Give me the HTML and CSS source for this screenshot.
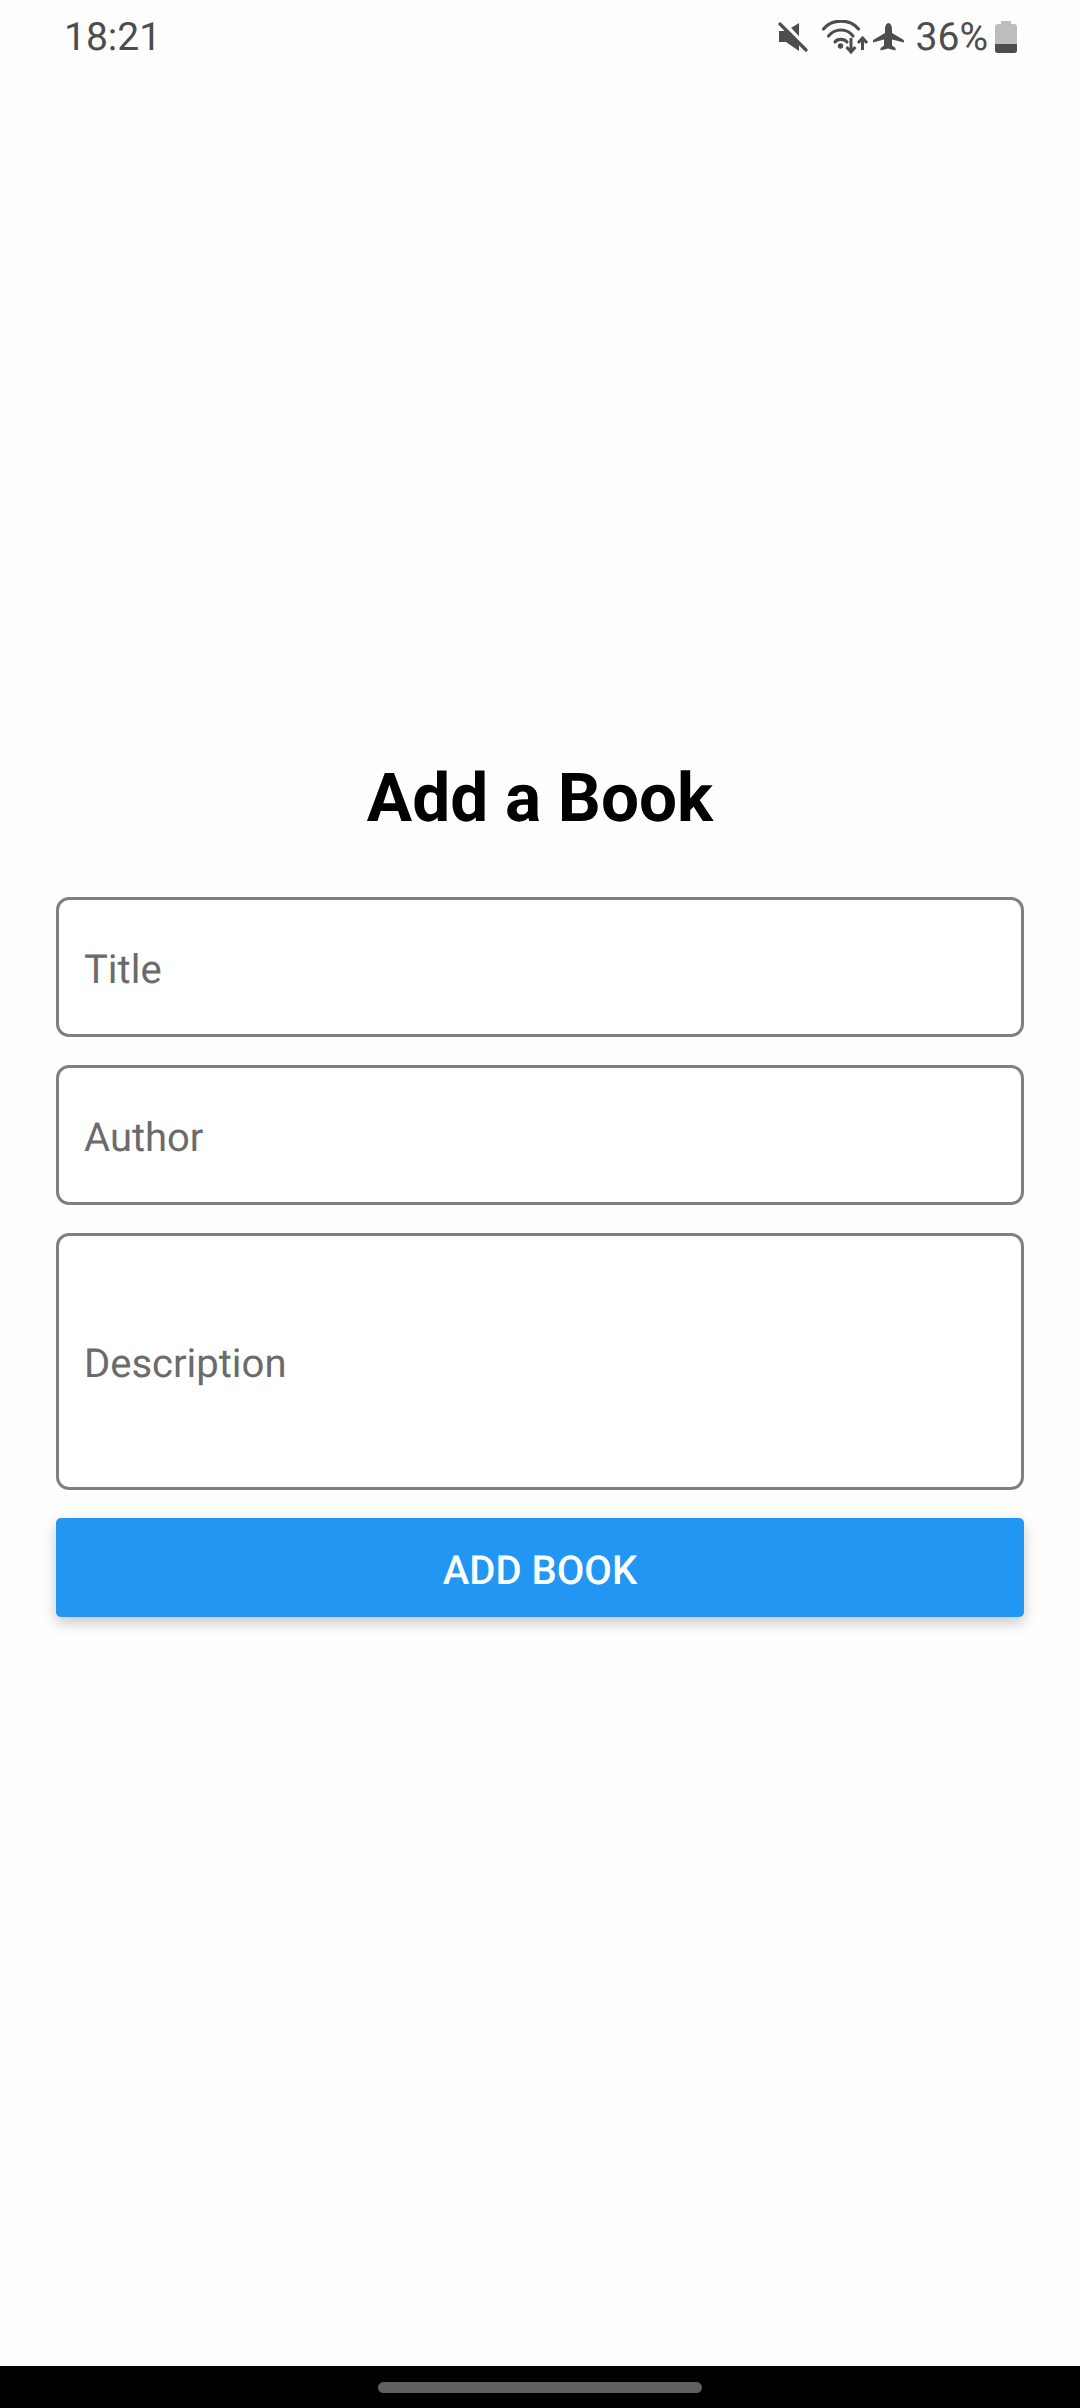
FILE: index.html
```html
<!DOCTYPE html>
<html lang="en">

<head>
  <meta charset="UTF-8">
  <meta name="viewport" content="width=device-width, initial-scale=1.0">
  <title>Add a Book</title>
  <link rel="stylesheet" href="styles.css">
</head>

<body>
  <div class="status-bar">
    <span class="clock">18:21</span>
    <div class="status-icons">
      <svg class="icon-mute" width="30" height="30" viewBox="0 0 30 30">
        <path d="M1 9h7L21 1v28L8 20H1z" fill="#4d4d4d"/>
        <path d="M4 0l26 28" stroke="#fefefe" stroke-width="5.500"/>
        <path d="M2 2l26 26" stroke="#4d4d4d" stroke-width="3.200" stroke-linecap="round"/>
      </svg>
      <svg class="icon-wifi" width="46" height="34" viewBox="0 0 46 34">
        <g fill="none" stroke="#4d4d4d" stroke-width="3.100" stroke-linecap="round">
          <path d="M1.500 9C10 -1.500 28 -1.500 36.500 9"/>
          <path d="M6.500 16C13 8 25 8 31 16"/>
          <path d="M13 22C15.500 18.500 22 18.500 25 22"/>
        </g>
        <circle cx="18.500" cy="26" r="2.700" fill="#4d4d4d"/>
        <path d="M29 18v14M24.500 27l4.500 5 4.500-5" fill="none" stroke="#4d4d4d" stroke-width="3"/>
        <path d="M40.500 30V18.500M36 23l4.500-5 4.500 5" fill="none" stroke="#4d4d4d" stroke-width="3"/>
      </svg>
      <svg class="icon-plane" width="32" height="30" viewBox="0 0 32 30">
        <path d="M15.500 1c2 0 3.500 3 3.500 6v4l11 6.500c.7.400 1 1 1 1.500v1.500l-12-3v6l3.500 2.500v2.500l-7.500-2-7.500 2v-2.500l3.500-2.500v-6L0 20.500V19c0-.5.300-1.100 1-1.500L12 11V7c0-3 1.500-6 3.500-6z" fill="#4d4d4d"/>
      </svg>
      <span class="battery-text">36%</span>
      <div class="battery">
        <div class="battery-cap"></div>
        <div class="battery-body">
          <div class="battery-level"></div>
        </div>
      </div>
    </div>
  </div>

  <div class="container">
    <h1>Add a Book</h1>
    <div class="field">Title</div>
    <div class="field">Author</div>
    <div class="field field-large">Description</div>
    <button class="submit">ADD BOOK</button>
  </div>

  <div class="nav-bar">
    <div class="nav-handle"></div>
  </div>
</body>

</html>
```

FILE: styles.css
```css
html,
body {
  margin: 0;
  height: 100%;
}

body {
  display: flex;
  flex-direction: column;
  height: 2408px;
  background: #fefefe;
  font-family: Roboto, sans-serif;
  text-rendering: geometricPrecision;
}

.status-bar {
  display: flex;
  justify-content: space-between;
  align-items: center;
  height: 73px;
  padding: 0 63px 1px 64px;
  color: #4d4d4d;
}

.clock {
  font-size: 39px;
}

.status-icons {
  display: flex;
  align-items: center;
}

.icon-mute {
  margin-right: 14px;
}

.icon-wifi {
  margin-right: 5px;
}

.icon-plane {
  margin-right: 11px;
}

.battery-text {
  font-size: 39px;
  margin-right: 7px;
}

.battery {
  display: flex;
  flex-direction: column;
  align-items: center;
  width: 22px;
}

.battery-cap {
  width: 10px;
  height: 3px;
  background: #bdbdbd;
  border-radius: 1px 1px 0 0;
}

.battery-body {
  display: flex;
  flex-direction: column;
  justify-content: flex-end;
  width: 22px;
  height: 29px;
  background: #bdbdbd;
  border-radius: 3px;
  overflow: hidden;
}

.battery-level {
  height: 9px;
  background: #4d4d4d;
}

.container {
  flex: 1;
  padding: 686px 56px 0;
}

h1 {
  margin: 0 0 60px;
  font-size: 67.500px;
  line-height: 77px;
  font-weight: 700;
  text-align: center;
  color: #000000;
}

.field {
  display: flex;
  align-items: center;
  box-sizing: border-box;
  height: 140px;
  margin-bottom: 28px;
  padding: 4px 25px 0;
  border: 3px solid #808080;
  border-radius: 13px;
  background: #ffffff;
  font-size: 40px;
  color: #6b6b6b;
}

.field-large {
  height: 257px;
}

.submit {
  display: block;
  width: 100%;
  height: 99px;
  padding: 5px 0 0;
  border: 0;
  border-radius: 5px;
  background: #2196f3;
  color: #ffffff;
  font-family: Roboto, sans-serif;
  font-size: 40px;
  font-weight: 500;
  text-rendering: geometricPrecision;
  box-shadow: 0 6px 14px rgba(0, 0, 0, 0.22);
}

.nav-bar {
  display: flex;
  justify-content: center;
  height: 42px;
  padding-top: 16px;
  box-sizing: border-box;
  background: #000000;
}

.nav-handle {
  width: 324px;
  height: 11px;
  border-radius: 6px;
  background: #606060;
}
```
